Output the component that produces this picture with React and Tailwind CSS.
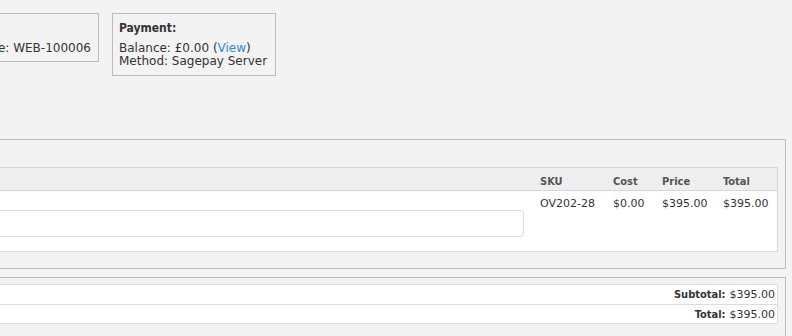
import React from "react";

const boldFont = "font-['DejaVu_Sans_Condensed','DejaVu_Sans',sans-serif] font-bold";

const lineItems = [
    { sku: "OV202-28", cost: "$0.00", price: "$395.00", total: "$395.00" },
];

const totals = [
    { label: "Subtotal:", value: "$395.00" },
    { label: "Total:", value: "$395.00" },
];

const InfoBox = ({ title, children, bottom = "pb-[6px]", right = "pr-[7px]" }) => (
    <div className={`shrink-0 border border-[#bcbcbc] pl-[6px] pt-[7px] whitespace-nowrap ${bottom} ${right}`}>
        <div className={`${boldFont} text-[12px] leading-[14px] mb-[7px]`}>{title}</div>
        <div className="text-[12px] leading-[13px]">{children}</div>
    </div>
);

const App = () => {
    return (
        <div className="w-[792px] h-[336px] overflow-hidden bg-[#f3f3f3] text-[#333] font-['DejaVu_Sans',sans-serif]">
            {/* Order / payment summary boxes */}
            <div className="flex items-start pt-[13px]">
                <div className="w-[99px] shrink-0 flex justify-end">
                    <InfoBox title="Order:">
                        <div>Reference: WEB-100006</div>
                    </InfoBox>
                </div>
                <div className="ml-[13px]">
                    <InfoBox title="Payment:" bottom="pb-[7px]" right="pr-[8px]">
                        <div>
                            Balance: £0.00 (<span className="text-[#2b8ccf]">View</span>)
                        </div>
                        <div>Method: Sagepay Server</div>
                    </InfoBox>
                </div>
            </div>

            {/* Line items */}
            <div className="ml-[-40px] w-[826px] mt-[63px] h-[130px] border border-[#bdbdbd] pl-[7px] pr-[7px] pt-[27px]">
                <div className="border border-[#d6d6d6] bg-white text-[11px] leading-[13px]">
                    <div className="grid grid-cols-[563px_73px_49px_61px_62px] h-[23px] bg-[#eeeeee] border-b border-[#d6d6d6] text-[#555]">
                        <div />
                        <div className={`${boldFont} pl-[8px] pt-[7px]`}>SKU</div>
                        <div className={`${boldFont} pl-[8px] pt-[7px]`}>Cost</div>
                        <div className={`${boldFont} pl-[8px] pt-[7px]`}>Price</div>
                        <div className={`${boldFont} pl-[8px] pt-[7px]`}>Total</div>
                    </div>
                    {lineItems.map((item) => (
                        <div key={item.sku} className="grid grid-cols-[563px_73px_49px_61px_62px] h-[60px]">
                            <div className="pr-[8px] pt-[6px]">
                                <div className="h-[13px]" />
                                <input
                                    type="text"
                                    className="block w-full h-[27px] border border-[#e0e0e0] rounded-[3px] bg-white"
                                />
                            </div>
                            <div className="pl-[8px] pt-[6px]">{item.sku}</div>
                            <div className="pl-[8px] pt-[6px]">{item.cost}</div>
                            <div className="pl-[8px] pt-[6px]">{item.price}</div>
                            <div className="pl-[8px] pt-[6px]">{item.total}</div>
                        </div>
                    ))}
                </div>
            </div>

            {/* Totals */}
            <div className="ml-[-40px] w-[826px] mt-[8px] h-[80px] border border-[#bdbdbd] pl-[7px] pr-[7px] pt-[6px]">
                <div className="border border-[#dcdcdc] bg-white text-[11px] leading-[13px]">
                    {totals.map((row, i) => (
                        <div
                            key={row.label}
                            className={`flex items-center justify-end h-[19px] pr-[2px] ${i > 0 ? "border-t border-[#dcdcdc]" : ""}`}
                        >
                            <span className={boldFont}>{row.label}</span>
                            <span className="ml-[4px]">{row.value}</span>
                        </div>
                    ))}
                </div>
            </div>
        </div>
    );
};

export default App;
